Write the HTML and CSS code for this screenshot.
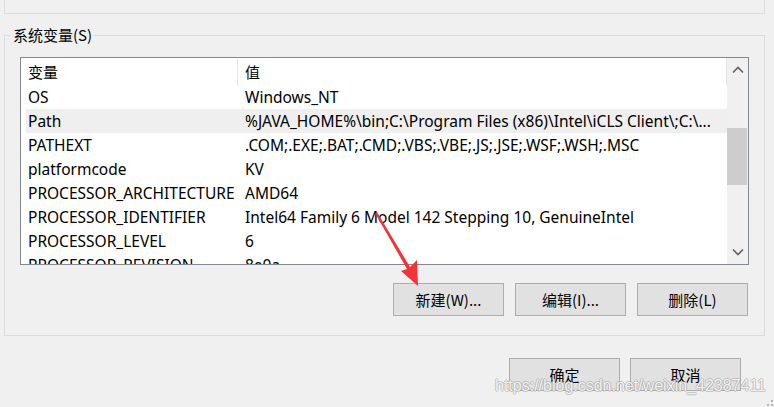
FILE: index.html
```html
<!DOCTYPE html>
<html lang="zh-CN">
<head>
<meta charset="utf-8">
<link rel="stylesheet" href="styles.css">
</head>
<body>
<div class="dialog">
  <div class="top-group"></div>
  <fieldset class="group">
    <legend class="group-label">系统变量(S)</legend>
    <div class="list">
      <div class="list-body">
        <div class="list-header">
          <div class="col-name">变量</div>
          <div class="col-value">值</div>
        </div>
        <div class="rows">
          <div class="row"><div class="col-name">OS</div><div class="col-value">Windows_NT</div></div>
          <div class="row selected"><div class="col-name">Path</div><div class="col-value">%JAVA_HOME%\bin;C:\Program Files (x86)\Intel\iCLS Client\;C:\...</div></div>
          <div class="row"><div class="col-name">PATHEXT</div><div class="col-value">.COM;.EXE;.BAT;.CMD;.VBS;.VBE;.JS;.JSE;.WSF;.WSH;.MSC</div></div>
          <div class="row"><div class="col-name">platformcode</div><div class="col-value">KV</div></div>
          <div class="row"><div class="col-name">PROCESSOR_ARCHITECTURE</div><div class="col-value">AMD64</div></div>
          <div class="row"><div class="col-name">PROCESSOR_IDENTIFIER</div><div class="col-value">Intel64 Family 6 Model 142 Stepping 10, GenuineIntel</div></div>
          <div class="row"><div class="col-name">PROCESSOR_LEVEL</div><div class="col-value">6</div></div>
          <div class="row"><div class="col-name">PROCESSOR_REVISION</div><div class="col-value">8e0a</div></div>
        </div>
      </div>
      <div class="scrollbar">
        <div class="sb-btn">
          <svg width="12" height="8" viewBox="0 0 12 8"><path d="M1 6.5 L6 1.5 L11 6.5" fill="none" stroke="#606060" stroke-width="1.6"/></svg>
        </div>
        <div class="sb-track">
          <div class="sb-thumb"></div>
        </div>
        <div class="sb-btn">
          <svg width="12" height="8" viewBox="0 0 12 8"><path d="M1 1.5 L6 6.5 L11 1.5" fill="none" stroke="#606060" stroke-width="1.6"/></svg>
        </div>
      </div>
    </div>
    <div class="group-buttons">
      <button class="btn">新建(W)...</button>
      <button class="btn">编辑(I)...</button>
      <button class="btn">删除(L)</button>
    </div>
  </fieldset>
  <div class="dialog-buttons">
    <button class="btn">确定</button>
    <button class="btn">取消</button>
  </div>
</div>
<svg class="annotation" width="774" height="407" viewBox="0 0 774 407">
  <polygon points="375,213 377,212 410,267 417,260 418,286 401,271 407,269" fill="#f0343a"/>
</svg>
<div class="watermark">https://blog.csdn.net/weixin_42387411</div>
<div class="grip"></div>
</body>
</html>
```
FILE: styles.css
```css
* { box-sizing: border-box; }
html, body {
  margin: 0;
  padding: 0;
  width: 774px;
  height: 407px;
  overflow: hidden;
  background: #f0f0f0;
}
body {
  font-family: "Noto Sans", "Noto Sans CJK SC", sans-serif;
  font-size: 15.5px;
  color: #000;
  position: relative;
}
.dialog {
  display: flex;
  flex-direction: column;
}
.top-group {
  height: 14px;
  margin: 0 9px 0 4px;
  border: 1px solid #dcdcdc;
  border-top: none;
}
.group {
  margin: 11px 9px 0 4px;
  padding: 0 0 20px 0;
  border: 1px solid #dcdcdc;
  height: 311px;
  display: flex;
  flex-direction: column;
}
.group-label {
  font-family: "Noto Sans CJK SC", sans-serif;
  font-size: 15px;
  padding: 0 2px;
  margin-left: 6px;
  line-height: 20px;
  color: #000;
}
.list {
  margin: 12px 0 0 15px;
  width: 729px;
  height: 208px;
  border: 1px solid #828790;
  background: #fff;
  display: flex;
  overflow: hidden;
}
.list-body {
  flex: 1;
  min-width: 0;
  overflow: hidden;
}
.list-header {
  display: flex;
  height: 27px;
  align-items: center;
  margin-left: 5px;
  border-right: 1px solid #e5e5e5;
  font-family: "Noto Sans CJK SC", sans-serif;
  font-size: 15px;
}
.list-header .col-name {
  border-right: 1px solid #e5e5e5;
  height: 26px;
  display: flex;
  align-items: center;
}
.rows { margin-left: 5px; }
.row {
  display: flex;
  height: 24px;
  align-items: center;
  white-space: nowrap;
}
.row.selected { background: #efefef; }
.col-name {
  width: 212px;
  flex: none;
  padding-left: 2px;
  white-space: nowrap;
  overflow: hidden;
}
.col-value {
  flex: 1;
  min-width: 0;
  padding-left: 7px;
  white-space: nowrap;
  overflow: hidden;
}
.scrollbar {
  width: 21px;
  flex: none;
  background: #f0f0f0;
  display: flex;
  flex-direction: column;
}
.sb-btn {
  height: 24px;
  display: flex;
  align-items: center;
  justify-content: center;
}
.sb-track {
  flex: 1;
  padding-top: 46px;
}
.sb-thumb {
  height: 57px;
  margin-right: 1px;
  background: #cdcdcd;
}
.group-buttons {
  display: flex;
  justify-content: flex-end;
  gap: 11px;
  margin-top: 18px;
  padding-right: 16px;
}
.btn {
  width: 111px;
  height: 33px;
  background: #e1e1e1;
  border: 1px solid #adadad;
  font-family: "Noto Sans CJK SC", sans-serif;
  font-size: 15px;
  color: #000;
  padding: 0;
  margin: 0;
}
.dialog-buttons {
  display: flex;
  justify-content: flex-end;
  gap: 10px;
  margin-top: 22px;
  padding-right: 33px;
}
.annotation {
  position: absolute;
  left: 0;
  top: 0;
  pointer-events: none;
}
.watermark {
  position: absolute;
  left: 495px;
  top: 377px;
  font-family: "Liberation Sans", Arial, sans-serif;
  font-size: 16px;
  line-height: 18px;
  color: rgba(255, 255, 255, 0.85);
  text-shadow:
    1px 0 0 rgba(150, 150, 150, 0.45),
    -1px 0 0 rgba(150, 150, 150, 0.45),
    0 1px 0 rgba(150, 150, 150, 0.45),
    0 -1px 0 rgba(150, 150, 150, 0.45);
  white-space: nowrap;
}
.grip {
  position: absolute;
  right: 1px;
  bottom: 1px;
  width: 6px;
  height: 6px;
  background:
    linear-gradient(#b8b8b8, #b8b8b8) 4px 0 / 2px 2px no-repeat,
    linear-gradient(#b8b8b8, #b8b8b8) 0 4px / 2px 2px no-repeat,
    linear-gradient(#b8b8b8, #b8b8b8) 4px 4px / 2px 2px no-repeat;
}
```
